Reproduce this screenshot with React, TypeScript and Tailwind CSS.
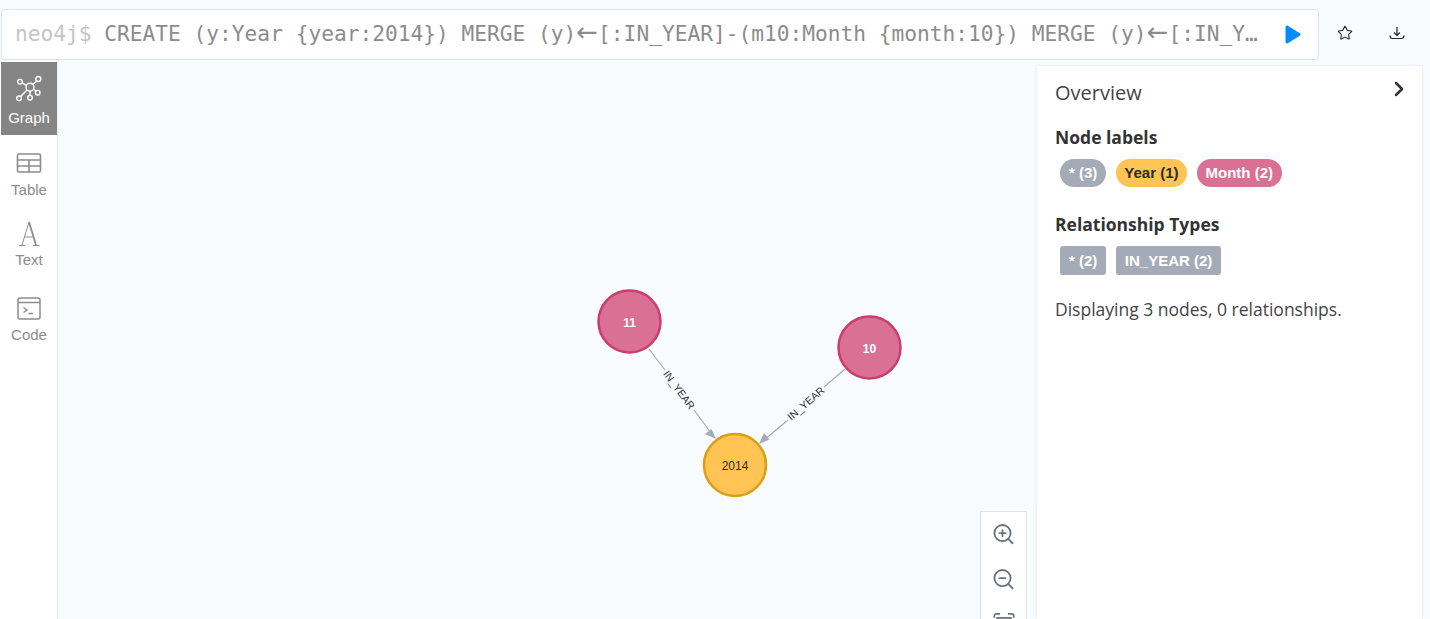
import { ChevronRight, Star, ZoomIn, ZoomOut } from "lucide-react"

const tabs = [
  { name: "Table", icon: <TableIcon />, top: "pt-[18px]", gap: "mt-[8px]" },
  { name: "Text", icon: <TextIcon />, top: "pt-[22px]", gap: "mt-[4px]" },
  { name: "Code", icon: <CodeIcon />, top: "pt-[28px]", gap: "mt-[6px]" },
]

function GraphIcon() {
  return (
    <svg width="28" height="28" viewBox="0 0 28 28" fill="none" stroke="currentColor" strokeWidth="1.4">
      <circle cx="15" cy="12.300" r="4" />
      <circle cx="5" cy="6.700" r="2.300" />
      <circle cx="23.300" cy="4" r="2.500" />
      <circle cx="22.700" cy="17.700" r="2.300" />
      <circle cx="15" cy="22.700" r="2.300" />
      <circle cx="4" cy="23.300" r="2.300" />
      <path d="M7 7.800l4.500 2.500M21.700 6l-4 3.500M18.800 14l1.900 2.200M15 16.300v4.100M12 15l-6.400 6.600" />
    </svg>
  )
}

function TableIcon() {
  return (
    <svg width="26" height="20" viewBox="0 0 26 20" fill="none" stroke="#8c8c8c" strokeWidth="1.6">
      <rect x="1.500" y="1" width="23" height="18" rx="1.500" />
      <path d="M1.500 7h23M1.500 13h23M13 7v12" />
    </svg>
  )
}

function TextIcon() {
  return (
    <svg width="22" height="26" viewBox="0 0 22 26" fill="none" stroke="#8c8c8c">
      <path d="M11 1L4 24" strokeWidth="1" />
      <path d="M11 1l7 23" strokeWidth="1.800" />
      <path d="M6.500 16h9" strokeWidth="1" />
      <path d="M1 24.500h6M15 24.500h6.500" strokeWidth="1" />
    </svg>
  )
}

function CodeIcon() {
  return (
    <svg width="24" height="23" viewBox="0 0 24 23" fill="none" stroke="#8c8c8c" strokeWidth="1.500">
      <rect x="1" y="1" width="22" height="21" rx="2" />
      <path d="M1 5.500h22" />
      <path d="M6.500 10.500l3.500 2.500-3.500 2.500M11.500 16.500h4.500" />
    </svg>
  )
}

function DownloadIcon() {
  return (
    <svg width="16" height="14" viewBox="0 0 16 14" fill="none" stroke="#1f2430" strokeWidth="1.200">
      <path d="M8 1v8M5 6.500L8 9.500l3-3" />
      <path d="M1 9.500c0 2 1 3 2.500 3h9c1.500 0 2.500-1 2.500-3" />
    </svg>
  )
}

function PlayIcon() {
  return (
    <svg width="16" height="19" viewBox="0 0 16 19">
      <path d="M2 2l12 7.500L2 17z" fill="#018bff" stroke="#018bff" strokeWidth="3" strokeLinejoin="round" />
    </svg>
  )
}

function FitIcon() {
  return (
    <svg width="22" height="18" viewBox="0 0 22 18" fill="none" stroke="#6b7280" strokeWidth="1.800">
      <path d="M1 5V3a2 2 0 012-2h4M15 1h4a2 2 0 012 2v2M4 5h14v8H4z" />
    </svg>
  )
}

function Node({ x, y, fill, stroke, color, label, bold }: { x: number; y: number; fill: string; stroke: string; color: string; label: string; bold?: boolean }) {
  return (
    <g>
      <circle cx={x} cy={y} r="31" fill={fill} stroke={stroke} strokeWidth="2.500" />
      <text
        x={x}
        y={y + 5}
        textAnchor="middle"
        fontSize="12"
        fontWeight={bold ? "bold" : "normal"}
        fill={color}
        fontFamily="Liberation Sans, Arial, sans-serif"
      >
        {label}
      </text>
    </g>
  )
}

function Graph() {
  return (
    <svg className="absolute inset-0 h-full w-full" viewBox="58 62 979 557" fill="none">
      <path d="M649 349l16 21M694 410l17 23" stroke="#a5abb6" strokeWidth="1.200" />
      <path d="M716 439l-11-5 6.500-5z" fill="#a5abb6" />
      <path d="M845 369l-21 18M788 420l-24 20" stroke="#a5abb6" strokeWidth="1.200" />
      <path d="M759 444l5-11 5.500 6.500z" fill="#a5abb6" />
      <text
        transform="translate(679 390) rotate(53.500)"
        textAnchor="middle"
        y="3.500"
        fontSize="10.500"
        fill="#2a2c34"
        fontFamily="Liberation Sans, Arial, sans-serif"
      >
        IN_YEAR
      </text>
      <text
        transform="translate(806 403.500) rotate(-41)"
        textAnchor="middle"
        y="3.500"
        fontSize="10.500"
        fill="#2a2c34"
        fontFamily="Liberation Sans, Arial, sans-serif"
      >
        IN_YEAR
      </text>
      <Node x={629.5} y={321.5} fill="#da7194" stroke="#cc3c6c" color="#ffffff" label="11" bold />
      <Node x={869.5} y={347.5} fill="#da7194" stroke="#cc3c6c" color="#ffffff" label="10" bold />
      <Node x={735} y={465} fill="#ffc454" stroke="#d9a013" color="#2a2c34" label="2014" />
    </svg>
  )
}

function Arrow() {
  return <span className="font-['DejaVu_Sans',sans-serif] text-[26px] leading-[0]">←</span>
}

export default function App() {
  return (
    <div className="flex h-[619px] w-[1430px] flex-col overflow-hidden bg-[#f9fcff] font-['Liberation_Sans',Arial,sans-serif]">
      {/* query bar */}
      <div className="flex h-[62px] shrink-0 items-start pt-[9px] pl-[1px]">
        <div className="flex h-[51px] w-[1318px] items-center rounded-[3px] border border-[#dce5ee] bg-white pr-[17px] pl-[13px]">
          <div className="mb-[2px] whitespace-nowrap font-['DejaVu_Sans_Mono',monospace] text-[21.2px] text-[#8c8c8c]">
            <span className="text-[#c4c4c4]">neo4j$</span> CREATE (y:Year {"{year:2014}"}) MERGE (y)<Arrow />[:IN_YEAR]-(m10:Month {"{month:10}"}) MERGE (y)<Arrow />[:IN_Y…
          </div>
          <div className="ml-auto flex"><PlayIcon /></div>
        </div>
        <div className="flex h-[48px] w-[52px] items-center justify-center">
          <Star size={16} color="#1f2430" strokeWidth={1.6} />
        </div>
        <div className="flex h-[48px] w-[52px] items-center justify-center">
          <DownloadIcon />
        </div>
      </div>

      <div className="flex min-h-0 flex-1">
        {/* sidebar */}
        <div className="flex w-[58px] shrink-0 flex-col border-r border-[#e6edf4] bg-white pl-[1px]">
          <div className="flex h-[73px] flex-col items-center bg-[#858585] pt-[13px] text-[15px] leading-[18px] text-white">
            <GraphIcon />
            <span className="mt-[6px]">Graph</span>
          </div>
          {tabs.map((tab) => (
            <div key={tab.name} className={`flex flex-col items-center text-[15px] leading-[18px] text-[#8c8c8c] ${tab.top}`}>
              {tab.icon}
              <span className={tab.gap}>{tab.name}</span>
            </div>
          ))}
        </div>

        {/* canvas */}
        <div className="relative min-w-0 flex-1">
          <Graph />
          <div className="absolute top-[449px] left-[922px] flex h-[120px] w-[47px] flex-col items-center gap-[21px] border border-[#dbe4f0] bg-white pt-[10px] text-[#6b7280]">
            <ZoomIn size={25} strokeWidth={1.8} />
            <ZoomOut size={25} strokeWidth={1.8} />
            <FitIcon />
          </div>
        </div>

        {/* overview panel */}
        <div className="mt-[4px] mr-[8px] w-[385px] shrink-0 bg-white pt-[13px] pl-[18px] font-['Open_Sans',sans-serif] text-[#333333] shadow-[0_0_3px_rgba(200,210,225,0.6)]">
          <div className="relative">
            <div className="text-[20px] leading-[28px] text-[#444444]">Overview</div>
            <ChevronRight className="absolute top-[-2px] left-[332px]" size={24} color="#333333" strokeWidth={2.5} />
          </div>
          <div className="mt-[18px] text-[17.5px] leading-[24px] font-bold">Node labels</div>
          <div className="mt-[10px] flex gap-[10px] pl-[5px] font-['Liberation_Sans',Arial,sans-serif] text-[15px] font-bold">
            <span className="flex h-[28px] items-center rounded-full bg-[#a5abb6] px-[9px] pt-[1px] text-white">* (3)</span>
            <span className="flex h-[28px] items-center rounded-full bg-[#ffc454] px-[8px] pt-[1px] text-[#2a2c34]">Year (1)</span>
            <span className="flex h-[28px] items-center rounded-full bg-[#da7194] px-[9px] pt-[1px] text-white">Month (2)</span>
          </div>
          <div className="mt-[25px] text-[17.5px] leading-[24px] font-bold">Relationship Types</div>
          <div className="mt-[10px] flex gap-[10px] pl-[5px] font-['Liberation_Sans',Arial,sans-serif] text-[15px] font-bold">
            <span className="flex h-[29px] items-center rounded-[3px] bg-[#a5abb6] px-[9px] pt-[1px] text-white">* (2)</span>
            <span className="flex h-[29px] items-center rounded-[3px] bg-[#a5abb6] px-[8.5px] pt-[1px] text-white">IN_YEAR (2)</span>
          </div>
          <div className="mt-[22px] text-[17.5px] leading-[24px] text-[#444444]">Displaying 3 nodes, 0 relationships.</div>
        </div>
      </div>
    </div>
  )
}
